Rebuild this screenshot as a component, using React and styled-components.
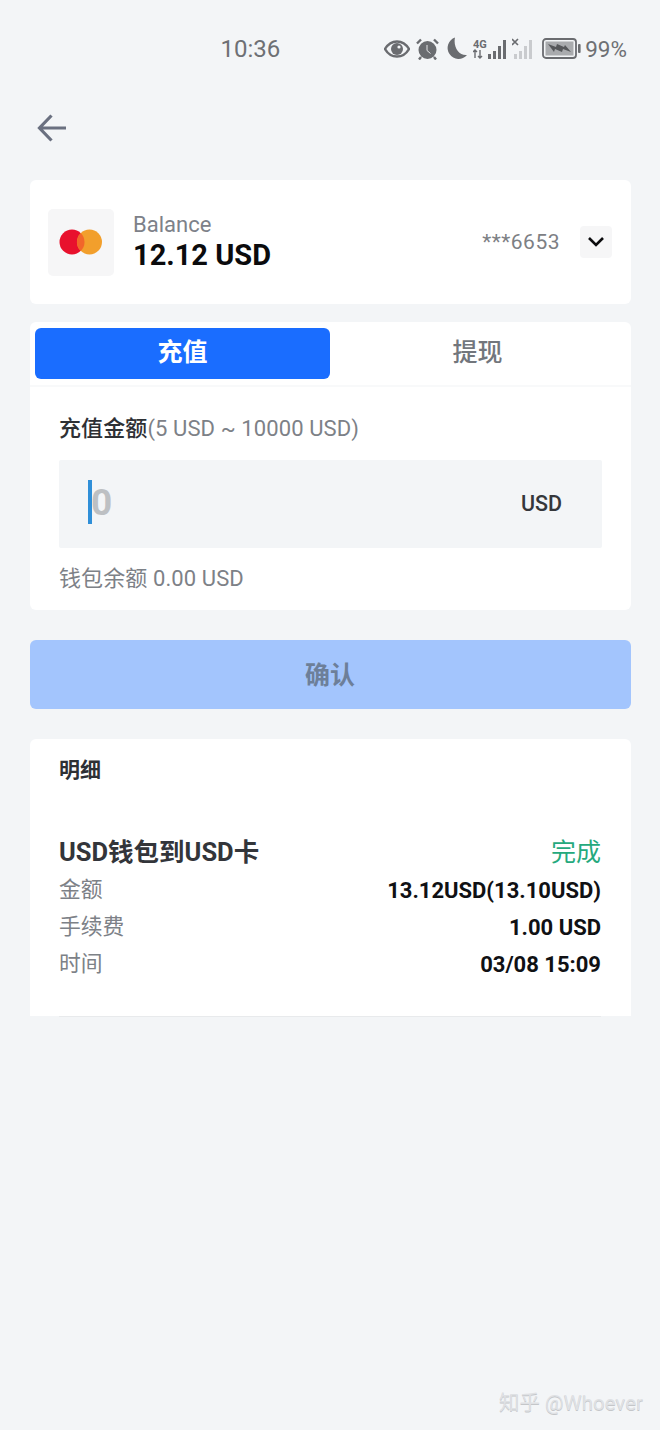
import React from "react";
import styled, { createGlobalStyle } from "styled-components";

const GlobalStyle = createGlobalStyle`
  * { box-sizing: border-box; }
  html, body { margin: 0; padding: 0; background: #f3f5f7; }
  body { font-family: Roboto, "Noto Sans CJK SC", sans-serif; }
`;

const Page = styled.div`
  position: relative;
  width: 660px;
  height: 1430px;
  overflow: hidden;
  padding: 0 29px 0 30px;
  background: #f3f5f7;
`;

const StatusBar = styled.div`
  display: flex;
  align-items: center;
  justify-content: space-between;
  height: 97px;
  margin: 0 -29px 0 -30px;
  padding: 0 33px 0 220.5px;
  color: #6a6c70;
`;

const Clock = styled.span`
  font-size: 24px;
  color: #6e7074;
`;

const StatusIcons = styled.div`
  display: flex;
  align-items: center;
`;

const StatusIcon = styled.svg`
  display: block;
  margin-left: ${(p) => p.$gap || 0}px;
`;

const Percent = styled.span`
  font-size: 22.5px;
  margin-left: 4px;
  color: #6e7074;
`;

const BackRow = styled.div`
  height: 83px;
  padding-top: 15px;
`;

const BackIcon = styled.svg`
  display: block;
`;

const Card = styled.section`
  background: #fff;
  border-radius: 6px;
  margin-bottom: ${(p) => p.$mb || 0}px;
`;

const BalanceCard = styled(Card)`
  display: flex;
  align-items: center;
  height: 124px;
  padding: 0 19px 0 18px;
`;

const LogoBox = styled.div`
  display: flex;
  align-items: center;
  justify-content: center;
  width: 66px;
  height: 67px;
  border-radius: 5px;
  background: #f6f6f7;
`;

const BalanceInfo = styled.div`
  flex: 1;
  margin-left: 19px;
`;

const BalanceLabel = styled.div`
  font-size: 22px;
  line-height: 26px;
  color: #7d8189;
`;

const BalanceValue = styled.div`
  font-size: 29px;
  line-height: 34px;
  font-weight: 700;
  color: #0b0b0d;
`;

const CardNumber = styled.span`
  font-size: 21px;
  color: #7d8084;
  letter-spacing: 0.5px;
`;

const DropButton = styled.div`
  display: flex;
  align-items: center;
  justify-content: center;
  width: 32px;
  height: 32px;
  margin-left: 20px;
  border-radius: 4px;
  background: #f6f6f7;
`;

const FormCard = styled(Card)`
  height: 288px;
`;

const Tabs = styled.div`
  display: flex;
  height: 65px;
  padding: 6px 6px 0 5px;
  border-bottom: 2px solid #f8f9fa;
`;

const Tab = styled.div`
  flex: ${(p) => (p.$active ? "0 0 295px" : "1")};
  height: 51px;
  padding-bottom: 8px;
  display: flex;
  align-items: center;
  justify-content: center;
  border-radius: 6px;
  font-size: 25px;
  font-weight: ${(p) => (p.$active ? 700 : 500)};
  color: ${(p) => (p.$active ? "#fff" : "#72767c")};
  background: ${(p) => (p.$active ? "#1a6dff" : "transparent")};
`;

const FormBody = styled.div`
  padding: 27px 29px 0;
`;

const AmountLabel = styled.div`
  font-size: 22px;
  line-height: 30px;
  letter-spacing: 0.1px;
  color: #7d8187;
  strong {
    font-weight: 500;
    color: #2e3034;
  }
`;

const AmountInput = styled.div`
  display: flex;
  align-items: center;
  justify-content: space-between;
  height: 88px;
  margin-top: 16px;
  padding: 0 40px 4px 29px;
  border-radius: 2px;
  background: #f3f5f7;
`;

const Placeholder = styled.div`
  display: flex;
  align-items: center;
  font-size: 37px;
  font-weight: 700;
  color: #bdc0c3;
  &::before {
    content: "";
    width: 4px;
    height: 44px;
    margin-right: -1px;
    background: #2f8fd8;
  }
`;

const Currency = styled.span`
  font-size: 21.5px;
  font-weight: 500;
  padding-top: 2px;
  color: #35373b;
`;

const WalletLine = styled.div`
  margin-top: 16px;
  font-size: 22px;
  line-height: 30px;
  letter-spacing: 0.1px;
  color: #7d8187;
`;

const ConfirmButton = styled.div`
  display: flex;
  align-items: center;
  justify-content: center;
  height: 69px;
  margin: 30px 0;
  padding: 0 1px 4px 0;
  border-radius: 6px;
  background: #a3c5fd;
  font-size: 25px;
  font-weight: 700;
  color: #6d7f99;
`;

const DetailCard = styled(Card)`
  height: 277px;
  padding: 16px 30px 0 29px;
  border-radius: 6px 6px 0 0;
`;

const DetailTitle = styled.div`
  font-size: 21px;
  line-height: 30px;
  font-weight: 700;
  color: #2e3034;
`;

const Record = styled.div`
  margin-top: 50px;
  padding-bottom: 33px;
  border-bottom: 1px solid #e8eaec;
`;

const RecordRow = styled.div`
  display: flex;
  align-items: center;
  justify-content: space-between;
  height: 37px;
`;

const RecordName = styled.span`
  font-size: 25.5px;
  font-weight: 700;
  padding-bottom: 8px;
  color: #33353a;
`;

const RecordState = styled.span`
  font-size: 25px;
  padding-bottom: 8px;
  color: #25a97d;
`;

const RowKey = styled.span`
  font-size: 21.8px;
  padding-bottom: 6px;
  color: #7d8187;
`;

const RowValue = styled.span`
  font-size: 22px;
  font-weight: 700;
  color: #101114;
`;

const Watermark = styled.div`
  position: absolute;
  right: 17px;
  top: 1390px;
  font-size: 20.5px;
  line-height: 26px;
  color: #dfe1e4;
  text-shadow: 0 1px 0 #c4c6c9;
`;

function SignalBars({ dim }) {
  const color = dim ? "#c9cbce" : "#6a6c70";
  return (
    <>
      <rect x="0" y="14" width="3" height="5" fill={color} />
      <rect x="5" y="11" width="3" height="8" fill={color} />
      <rect x="10" y="6" width="3" height="13" fill={color} />
      <rect x="15" y="0" width="3" height="19" fill={color} />
    </>
  );
}

export default function App() {
  return (
    <Page>
      <GlobalStyle />
      <StatusBar>
        <Clock>10:36</Clock>
        <StatusIcons>
          <StatusIcon width="26" height="18" viewBox="0 0 26 18">
            <path d="M1 9c3-5 7-7.500 12-7.500S22 4 25 9c-3 5-7 7.500-12 7.500S4 14 1 9z" fill="none" stroke="#6a6c70" strokeWidth="2.400" />
            <circle cx="13" cy="9" r="6" fill="#6a6c70" />
            <circle cx="15" cy="7" r="1.600" fill="#f3f5f7" />
          </StatusIcon>
          <StatusIcon $gap={6} width="23" height="22" viewBox="0 0 23 22">
            <circle cx="11.500" cy="12" r="9" fill="#6a6c70" />
            <path d="M11 7v5.500l3.500 3" fill="none" stroke="#e4e5e7" strokeWidth="1" />
            <path d="M1 5.500L5 1.500M22 5.500L18 1.500M5 19l-2 2.500M18 19l2 2.500" stroke="#6a6c70" strokeWidth="2.400" />
          </StatusIcon>
          <StatusIcon $gap={6} width="22" height="23" viewBox="0 0 22 23">
            <path d="M10 .5a11 11 0 1 0 12 17.500C14 19 8 10 10 .5z" fill="#6a6c70" />
          </StatusIcon>
          <StatusIcon $gap={6} width="33" height="22" viewBox="0 0 33 22">
            <text x="0" y="9.500" fontSize="11" fontWeight="700" fill="#6a6c70" fontFamily="Roboto, sans-serif">4G</text>
            <path d="M2 12v8M0 14l2-2 2 2M7 20v-8M5 18l2 2 2-2" fill="none" stroke="#6a6c70" strokeWidth="1.400" />
            <g transform="translate(15 2)">
              <SignalBars />
            </g>
          </StatusIcon>
          <StatusIcon $gap={6} width="22" height="22" viewBox="0 0 22 22">
            <path d="M0 1l6 6M6 1l-6 6" stroke="#6a6c70" strokeWidth="1.600" />
            <g transform="translate(2 2)">
              <SignalBars dim />
            </g>
          </StatusIcon>
          <StatusIcon $gap={8} width="39" height="21" viewBox="0 0 39 21">
            <rect x="1" y="1" width="33" height="19" rx="3" fill="none" stroke="#6a6c70" strokeWidth="1.800" />
            <rect x="3.500" y="3.500" width="28" height="14" fill="#a9abae" />
            <path d="M6 6l8 3 1-3 7 3 1-2 6 7-8-3-1 3-7-3-1 3z" fill="#55575a" />
            <rect x="36" y="6" width="2.600" height="9" rx="1" fill="#6a6c70" />
          </StatusIcon>
          <Percent>99%</Percent>
        </StatusIcons>
      </StatusBar>

      <BackRow>
        <BackIcon width="44" height="36" viewBox="0 0 44 36">
          <path d="M36 16H10M21.500 3.500L9.500 16l12 12.500" fill="none" stroke="#6a7080" strokeWidth="3.200" />
        </BackIcon>
      </BackRow>

      <BalanceCard $mb={18}>
        <LogoBox>
          <svg width="44" height="26" viewBox="0 0 44 26">
            <circle cx="13" cy="13" r="12.500" fill="#e8112d" />
            <circle cx="30.500" cy="13" r="12.500" fill="#f29f2c" />
            <path d="M21.700 4a12.500 12.500 0 0 1 0 18 12.500 12.500 0 0 1 0-18z" fill="#f2662a" />
          </svg>
        </LogoBox>
        <BalanceInfo>
          <BalanceLabel>Balance</BalanceLabel>
          <BalanceValue>12.12 USD</BalanceValue>
        </BalanceInfo>
        <CardNumber>***6653</CardNumber>
        <DropButton>
          <svg width="18" height="12" viewBox="0 0 18 12">
            <path d="M2 2l7 7 7-7" fill="none" stroke="#0c0c0e" strokeWidth="2.600" />
          </svg>
        </DropButton>
      </BalanceCard>

      <FormCard>
        <Tabs>
          <Tab $active>充值</Tab>
          <Tab>提现</Tab>
        </Tabs>
        <FormBody>
          <AmountLabel>
            <strong>充值金额</strong>(5 USD ~ 10000 USD)
          </AmountLabel>
          <AmountInput>
            <Placeholder>0</Placeholder>
            <Currency>USD</Currency>
          </AmountInput>
          <WalletLine>钱包余额 0.00 USD</WalletLine>
        </FormBody>
      </FormCard>

      <ConfirmButton>确认</ConfirmButton>

      <DetailCard>
        <DetailTitle>明细</DetailTitle>
        <Record>
          <RecordRow>
            <RecordName>USD钱包到USD卡</RecordName>
            <RecordState>完成</RecordState>
          </RecordRow>
          <RecordRow>
            <RowKey>金额</RowKey>
            <RowValue>13.12USD(13.10USD)</RowValue>
          </RecordRow>
          <RecordRow>
            <RowKey>手续费</RowKey>
            <RowValue>1.00 USD</RowValue>
          </RecordRow>
          <RecordRow>
            <RowKey>时间</RowKey>
            <RowValue>03/08 15:09</RowValue>
          </RecordRow>
        </Record>
      </DetailCard>

      <Watermark>知乎 @Whoever</Watermark>
    </Page>
  );
}
